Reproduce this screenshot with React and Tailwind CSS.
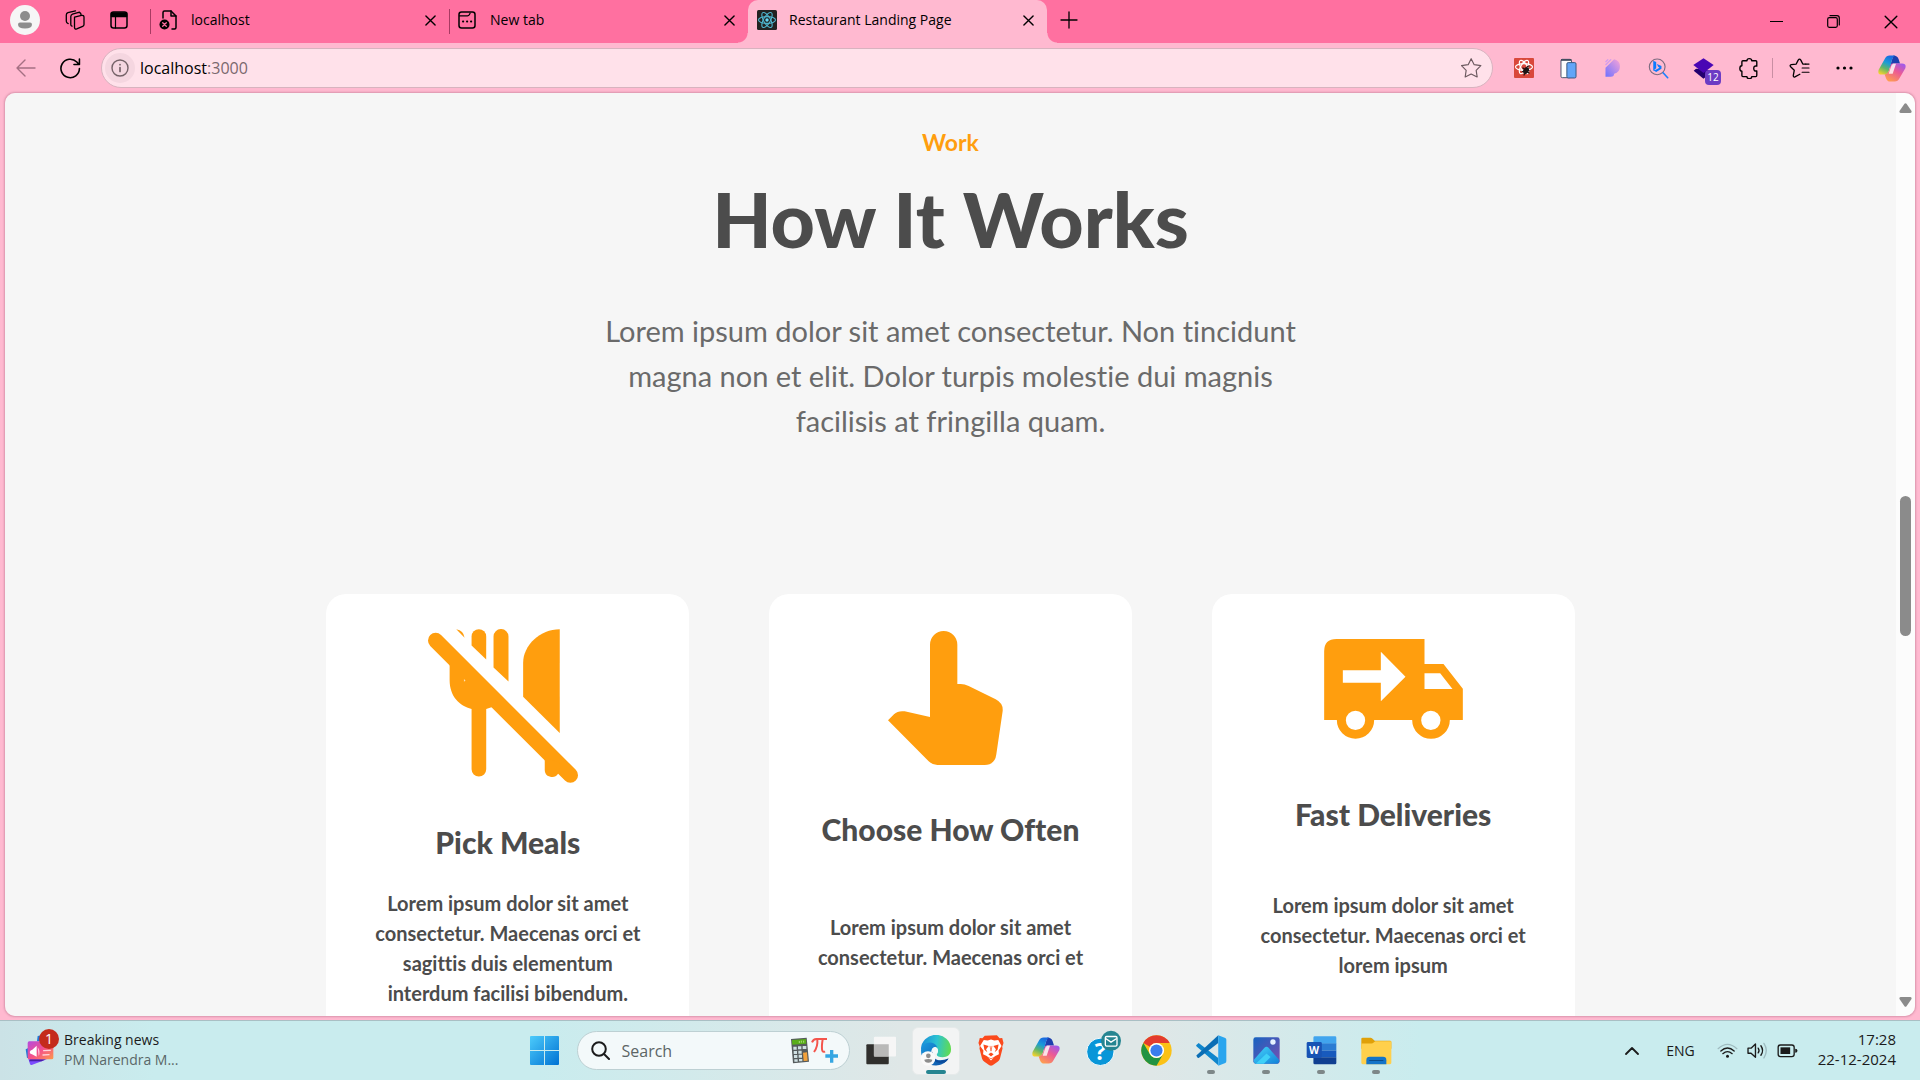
import React from "react";

/* ---------- window chrome icons ---------- */

function Line({ vb, w, h, sw = 1.5, children, className = "" }) {
  return (
    <svg viewBox={vb} width={w} height={h} fill="none" stroke="currentColor" strokeWidth={sw} strokeLinecap="round" strokeLinejoin="round" className={"shrink-0 " + className} aria-hidden="true">
      {children}
    </svg>
  );
}

const Avatar = () => (
  <svg viewBox="0 0 30 30" width="30" height="30" aria-hidden="true">
    <circle cx="15" cy="15" r="15" fill="#f6f6f6" />
    <circle cx="15" cy="11" r="5" fill="#8d8d8d" />
    <path d="M8 19.5q0-2 2-2h10q2 0 2 2 0 4-7 4t-7-4Z" fill="#8d8d8d" />
  </svg>
);

const Workspaces = () => (
  <Line vb="0 0 20 20" w="20" h="20" sw="1.3">
    <path d="M9.5 7.2 16.6 5.4q2.2-.3 2.4 1.6v7.4q0 1.4-1.3 1.9l-6 2.6q-2 .6-2.2-1.3Z" />
    <path d="M7 16.2q-1.200-.4-1.200-1.800V6.600q0-1.800 1.700-2.400l7-2" />
    <path d="M3.200 13.600q-1.900-.6-1.900-2.300V5q0-1.700 1.600-2.300L10.500.8" />
    <path d="M16 4.800q-.1-2.400-2-2.200" />
  </Line>
);

const VerticalTabs = () => (
  <Line vb="0 0 18 18" w="18" h="18">
    <rect x="1" y="1" width="16" height="16" rx="2.500" />
    <path d="M1.500 2h15v3.500h-15Z" fill="currentColor" />
    <path d="M5.500 6v11" strokeWidth="1.200" />
  </Line>
);

const BrokenPage = () => (
  <Line vb="0 0 18 20" w="18" h="20">
    <path d="M4 8V2.500Q4 1 5.500 1H12l5 5v11.500q0 1.500-1.500 1.500H13" />
    <path d="M12 1v5h5" />
    <circle cx="5.500" cy="14.500" r="5" fill="currentColor" stroke="none" />
    <path d="m3.700 12.700 3.600 3.600m0-3.600-3.600 3.600" stroke="#ff70a0" strokeWidth="1.300" />
  </Line>
);

const NewTabIcon = () => (
  <Line vb="0 0 18 18" w="18" h="18">
    <rect x="1" y="1" width="16" height="16" rx="2.500" />
    <path d="M1.500 4.800h8q1.300 0 1.800-1l.8-1.600" strokeWidth="1.200" />
    <path d="M5 10.500h.2M9 10.500h.2M13 10.500h.2" strokeWidth="2" />
  </Line>
);

const ReactIcon = () => (
  <svg viewBox="0 0 20 20" width="20" height="20" aria-hidden="true" className="shrink-0">
    <rect width="20" height="20" rx="1.500" fill="#222" />
    <g fill="none" stroke="#4fb6cf" strokeWidth="1.100">
      <ellipse cx="10" cy="10" rx="8.500" ry="3.400" />
      <ellipse cx="10" cy="10" rx="8.500" ry="3.400" transform="rotate(60 10 10)" />
      <ellipse cx="10" cy="10" rx="8.500" ry="3.400" transform="rotate(120 10 10)" />
    </g>
    <circle cx="10" cy="10" r="1.700" fill="#61dafb" />
  </svg>
);

const Cross = ({ s = 12, sw = 1.5 }) => (
  <Line vb="0 0 12 12" w={s} h={s} sw={sw}>
    <path d="m1 1 10 10M11 1 1 11" />
  </Line>
);

/* ---------- toolbar icons ---------- */

const Star = () => (
  <Line vb="60 176 62 60" w="21" h="20" sw="3.500" className="text-[#6d5a60]">
    <path d="m90 178 9 18 20 3-14 14 3 20-18-9-18 9 3-20-14-14 20-3Z" />
  </Line>
);

const ReactDev = () => (
  <svg viewBox="0 0 20 20" width="20" height="20" aria-hidden="true">
    <rect width="20" height="20" rx="1" fill="#d9483b" />
    <g fill="none" stroke="#fff" strokeWidth="1.200">
      <ellipse cx="10" cy="9" rx="8.500" ry="3.300" />
      <ellipse cx="10" cy="9" rx="7.500" ry="3.200" transform="rotate(60 10 9)" />
      <ellipse cx="10" cy="9" rx="7.500" ry="3.200" transform="rotate(120 10 9)" />
    </g>
    <g stroke="#1c1414" strokeWidth="1.200" strokeLinecap="round">
      <ellipse cx="12" cy="12.500" rx="2" ry="3" transform="rotate(30 12 12.500)" fill="#1c1414" />
      <path d="m9 10 6 5M8.500 13.500l6.500-1M10 17l4-7M13.500 8.500 15 8" />
    </g>
  </svg>
);

const Devices = () => (
  <svg viewBox="362 173 52 62" width="17" height="21" aria-hidden="true">
    <rect x="365" y="176" width="32" height="56" rx="4" fill="#fdfdfd" stroke="#46546b" strokeWidth="3" />
    <path d="M365 178h32" stroke="#3b4658" strokeWidth="5" />
    <rect x="383" y="186" width="28" height="47" rx="4" fill="#62a5f8" stroke="#38587f" strokeWidth="3" />
  </svg>
);

const PIcon = () => (
  <svg viewBox="497 178 50 54" width="17" height="18" aria-hidden="true">
    <defs>
      <linearGradient id="pg" x1="0" y1="1" x2="1" y2="0">
        <stop offset="0" stopColor="#6f72ff" />
        <stop offset="1" stopColor="#f7a3d8" />
      </linearGradient>
    </defs>
    <path d="M524 179a22 22 0 0 1 0 43q0 9-10 9h-16v-27Z" fill="url(#pg)" />
    <path d="m498 187 8-8m-8 17 17-17" stroke="#cf9bef" strokeWidth="3.500" />
  </svg>
);

const BingSearch = () => (
  <svg viewBox="626 172 62 64" width="21" height="21" aria-hidden="true" fill="none">
    <circle cx="653" cy="199" r="24" stroke="#7d6b80" strokeWidth="3.500" />
    <path d="m671 217 14 15" stroke="#1a80ff" strokeWidth="5" strokeLinecap="round" />
    <path d="m641 180 9 4v19l-9 8Z" fill="#0b7bff" />
    <path d="m641 209 9 6 16-10v-9l-14-6 4 9 4 3-11 6Z" fill="#0b7bff" />
  </svg>
);

const Layers = () => (
  <span className="relative block h-[21px] w-[21px]">
    <svg viewBox="761 173 62 62" width="21" height="21" aria-hidden="true">
      <path d="m763 211 7-6 52 6-30 23Z" fill="#22006f" />
      <path d="m792 174 30 20-30 23-30-23Z" fill="#4a06b4" />
    </svg>
    <span className="absolute left-3 top-3 grid h-[15px] w-4 place-items-center rounded-[4px] bg-[#6c3cc4] text-[10px] leading-none text-white">12</span>
  </span>
);

const Puzzle = () => (
  <Line vb="899 173 58 62" w="20" h="21" sw="4">
    <path d="M910 181h12q0-6 7-6t7 6h12q3 0 3 3v13q-9-2-9 7t9 7v13q0 4-3 4h-12q0 6-7 6t-7-6h-12q-3 0-3-3v-13q-6 0-6-8t6-8v-12q0-3 3-3Z" />
  </Line>
);

const Favorites = () => (
  <Line vb="1049 174 64 60" w="21" h="20" sw="4">
    <path d="M1100 192h-9l-6-12q-4-6-8 0l-6 12-15 2q-6 1-2 6l11 11-3 16q0 6 5 4l15-8" />
    <path d="M1089 204h21M1089 217h21M1100 192h10" strokeWidth="3.500" />
  </Line>
);

const Dots = () => (
  <svg viewBox="0 0 17 4" width="17" height="4" aria-hidden="true">
    <circle cx="2" cy="2" r="1.600" />
    <circle cx="8.500" cy="2" r="1.600" />
    <circle cx="15" cy="2" r="1.600" />
  </svg>
);

const Copilot = ({ id }) => (
  <svg viewBox="216 80 84 80" width="28" height="27" aria-hidden="true">
    <defs>
      <linearGradient id={id + "a"} x1=".6" y1="0" x2=".2" y2="1">
        <stop offset="0" stopColor="#1a6be0" />
        <stop offset=".35" stopColor="#1a9bd8" />
        <stop offset=".65" stopColor="#5fb56a" />
        <stop offset="1" stopColor="#f5d22b" />
      </linearGradient>
      <linearGradient id={id + "b"} x1=".9" y1="0" x2=".2" y2="1">
        <stop offset="0" stopColor="#9b59f0" />
        <stop offset=".45" stopColor="#ec5a95" />
        <stop offset="1" stopColor="#ffa04d" />
      </linearGradient>
    </defs>
    <path d="M262 81q12 0 16 11l4 13h-22l-10 14Z" fill="#1d3fae" />
    <path d="M237 90q4-9 14-9h16q-5 2-8 10l-11 37q-4 10-14 10h-8q-12 0-8-14Z" fill={`url(#${id}a)`} />
    <path d="M280 150q-4 9-14 9h-14q-8 0-12-10l-4-11q9-1 13-11l7-22q2 2 10 0h22q14 0 10 14Z" fill={`url(#${id}b)`} />
    <path d="M262 106h8l-10 30h-12l8-24q2-5 6-6Z" fill="#fdeef2" opacity=".9" />
  </svg>
);

/* ---------- meal section icons ---------- */

const NoMeals = () => (
  <svg viewBox="323 147 478 462" width="159" height="154" fill="#ff9e0e" aria-hidden="true">
    <path d="m346 181 405 405" stroke="#ff9e0e" strokeWidth="46" strokeLinecap="round" />
    <path d="M388 223v77c0 50 30 78 66 87v181a22 22 0 0 0 44 0V387l18-6h30Z" />
    <path d="M454 196v-27a22 22 0 0 1 44 0v69Z" />
    <path d="M520 262v-93a22 22 0 0 1 45 0v135Z" />
    <path d="M408 147q22 3 25 26Z" />
    <path d="M609 350V248c0-53 51-101 110-101v312Z" />
    <path d="M674 530v38a22 22 0 0 0 40 14l10-30Z" />
    <path d="m431 297 5 4-5 4Z" fill="#ffe0b0" />
  </svg>
);

const PointUp = () => (
  <svg viewBox="385 153 375 402" width="125" height="134" fill="#ff9e0e" aria-hidden="true">
    <path d="M511 411V194a41 41 0 0 1 82 0v118h10q12 0 24 6l81 40q23 12 21 35l-19 130q-4 32-35 32H533q-14 0-26-11L385 421l18-18q12-12 32-9Z" />
  </svg>
);

const Truck = () => (
  <svg viewBox="372 177 416 300" width="139" height="100" fill="#ff9e0e" aria-hidden="true">
    <path fillRule="evenodd" d="M372 214q0-37 37-37h264v75h57l58 74v94h-39a56.500 56.500 0 0 1-113 0H522a56 56 0 0 1-112 0h-38ZM428 271v37h114v56l74-74-74-75v56ZM673 280v47h84l-37-47ZM437 421a29 29 0 1 0 58 0a29 29 0 1 0-58 0ZM663 421a29 29 0 1 0 58 0a29 29 0 1 0-58 0Z" />
  </svg>
);

/* ---------- taskbar icons ---------- */

const News = () => (
  <span className="relative block h-8 w-9">
    <svg viewBox="74 98 90 96" width="30" height="32" aria-hidden="true">
      <defs>
        <linearGradient id="ng" x1="0" y1="0" x2="1" y2="1">
          <stop offset="0" stopColor="#b44be0" />
          <stop offset=".5" stopColor="#f4508c" />
          <stop offset="1" stopColor="#ff9a4a" />
        </linearGradient>
      </defs>
      <path d="m112 104 20-4v20h-22ZM76 144l8-4v30h-4Z" fill="#1f78d8" />
      <path d="m84 172 56 2-46 17q-4 1-5-3Z" fill="#7c4dff" />
      <path d="m90 174 46 0-12 6H86Z" fill="#4a1fa8" />
      <rect x="82" y="120" width="77" height="54" rx="5" fill="url(#ng)" />
      <path d="M88 152q2-6 8-7l13-12v33l-14-7q-6 0-7-7Z" fill="#fff" />
      <path d="M112 138q10 12 3 26Z" fill="#ffc4de" />
      <path d="m130 148 20-1M128 161l18-1" stroke="#ffd5dc" strokeWidth="4" strokeLinecap="round" />
    </svg>
    <span className="absolute -top-[5px] left-[14px] grid h-5 w-5 place-items-center rounded-full bg-[#c42b1c] text-[14px] leading-none text-white">1</span>
  </span>
);

const Start = () => (
  <svg viewBox="0 0 29 29" width="29" height="29" aria-hidden="true">
    <defs>
      <linearGradient id="wg" gradientUnits="userSpaceOnUse" x1="0" y1="0" x2="29" y2="29">
        <stop offset="0" stopColor="#4ccbfb" />
        <stop offset="1" stopColor="#0072d3" />
      </linearGradient>
    </defs>
    <path d="M0 1q0-1 1-1h13v14H0ZM15 0h13q1 0 1 1v13H15ZM0 15h14v14H1q-1 0-1-1ZM15 15h14v13q0 1-1 1H15Z" fill="url(#wg)" />
  </svg>
);

const MathDoodle = () => (
  <span className="relative block h-[29px] w-[50px] text-[32px] leading-[29px]">
    <svg viewBox="870 80 150 87" width="50" height="29" aria-hidden="true">
      <path d="m873 89 47-4 7 72-48 5Z" fill="#555b5c" />
      <path d="m876 92 42-3 1 14-42 3Z" fill="#58ad18" />
      <path d="M898 95v6M904 94v6M911 94v6" stroke="#b8e890" strokeWidth="2.500" />
      <g fill="#cfe0e2">
        <path d="M880 112h10v9h-10ZM894 111h10v9h-10ZM908 110h11v9h-11ZM881 125h10v9h-10ZM895 124h10v9h-10ZM882 137h10v9h-10ZM896 136h10v9h-10ZM883 150h10v7h-10ZM897 149h10v7h-10Z" />
        <path d="m909 130 12-1 2 25-12 1Z" fill="#f3a23a" />
      </g>
      <path d="M936 99q4-10 13-10h32M952 90q2 22-10 38M968 90q-4 24-1 34 3 5 8 2" stroke="#f4554c" strokeWidth="6" fill="none" />
      <path d="M995 122v38M976 140h38" stroke="#36a6e2" strokeWidth="10" />
    </svg>
  </span>
);

const TaskView = () => (
  <svg viewBox="1098 76 92 88" width="31" height="29" aria-hidden="true">
    <rect x="1098" y="101" width="68" height="61" rx="3" fill="#302f2d" />
    <rect x="1121" y="78" width="67" height="60" rx="3" fill="#f6f6f6" />
    <path d="M1121 101h45v37h-45Z" fill="#b9b9b8" />
  </svg>
);

const Edge = () => (
  <svg viewBox="1260 73 96 92" width="32" height="31" aria-hidden="true">
    <defs>
      <linearGradient id="eg1" x1="0" y1=".5" x2="1" y2=".6">
        <stop offset="0" stopColor="#1a8fd8" />
        <stop offset=".5" stopColor="#2cc3d2" />
        <stop offset="1" stopColor="#62dc4c" />
      </linearGradient>
      <linearGradient id="eg2" x1="0" y1="0" x2="1" y2="1">
        <stop offset="0" stopColor="#1b9ae0" />
        <stop offset="1" stopColor="#0b4fa5" />
      </linearGradient>
    </defs>
    <path d="M1263 116a45 43 0 0 1 90-2c1 18-12 25-25 25-14 0-21-5-16-11 5-7 2-21-14-22-20-1-32 6-35 10Z" fill="url(#eg1)" />
    <path d="M1263 118c1-24 36-32 49-10-12-3-20 8-18 20 3 18 22 26 50 16-8 14-22 20-36 20-26 0-46-20-45-46Z" fill="url(#eg2)" />
    <path d="M1297 120q2 20 12 27 14 8 37-5-6 14-22 14-20 2-30-15Z" fill="#0b4c9c" />
    <circle cx="1305" cy="119" r="9" fill="#f4f8fa" />
    <circle cx="1284" cy="143" r="22" fill="#fafafa" />
    <circle cx="1285" cy="135" r="7" fill="#8d8d8d" />
    <path d="M1273 147q12-5 24 0-1 9-12 9t-12-9Z" fill="#8d8d8d" />
  </svg>
);

const Brave = () => (
  <svg viewBox="54 73 78 94" width="26" height="31" aria-hidden="true">
    <path d="m74 75 37-1 8 9 8-1 4 15-4 12 1 5-8 31q-2 6-7 9l-15 11q-5 3-10 0l-15-11q-5-3-7-9l-8-31 1-5-4-12 4-15 8 1Z" fill="#fb4a1c" />
    <path d="m71 88 12 2 10-3 10 3 12-2 10 18-9 14 1 11-11 6-13 13-13-13-11-6 1-11-10-14Z" fill="#fff" />
    <path d="m70 102 16 4-8 10 4 9-9-7Zm46 0-16 4 8 10-4 9 9-7ZM85 131l8-5 8 5-8 7Z" fill="#fb4a1c" />
    <path d="m90 106 3 16 3-16M80 139l13 6 13-6" stroke="#fb4a1c" strokeWidth="2" fill="none" />
  </svg>
);

const Help = () => (
  <svg viewBox="381 55 108 110" width="36" height="37" aria-hidden="true">
    <circle cx="424" cy="120" r="41" fill="#0996d8" stroke="#f4fafc" strokeWidth="3" />
    <text x="424" y="145" textAnchor="middle" fontSize="70" fontWeight="700" fill="#fff" fontFamily="Open Sans, sans-serif">?</text>
    <circle cx="456" cy="87" r="30" fill="#268591" />
    <rect x="439" y="74" width="35" height="29" rx="4" fill="none" stroke="#fff" strokeWidth="4" />
    <path d="m440 80 16 11 17-11" fill="none" stroke="#fff" strokeWidth="4" />
  </svg>
);

const Chrome = () => (
  <svg viewBox="542 74 92 92" width="31" height="31" aria-hidden="true">
    <circle cx="588" cy="120" r="45" fill="#fbc116" />
    <path d="M549 97.500a45 45 0 0 1 78 0H588a22.500 22.500 0 0 0-19.500 11.250Z" fill="#e33b2e" />
    <path d="M549 97.500 568.500 131.250A22.500 22.500 0 0 0 607.500 131.250L588 165A45 45 0 0 1 549 97.500Z" fill="#229342" />
    <circle cx="588" cy="120" r="22.500" fill="#fff" />
    <circle cx="588" cy="120" r="18" fill="#3b7ded" />
  </svg>
);

const VSCode = () => (
  <svg viewBox="708 74 92 92" width="31" height="31" aria-hidden="true">
    <path d="m716 98 58 44v22l-64-56q-3-3 0-5Z" fill="#0f86cc" />
    <path d="m709 135 65-60v23l-58 44q-2 1-4-1Z" fill="#0a6eb5" />
    <path d="m774 75 21 8q3 2 3 5v63q0 4-3 6l-21 8Z" fill="#2aa5ee" />
  </svg>
);

const Photos = () => (
  <svg viewBox="878 80 80 80" width="27" height="27" aria-hidden="true">
    <defs>
      <linearGradient id="ph" x1="0" y1="0" x2="1" y2="1">
        <stop offset="0" stopColor="#1763c0" />
        <stop offset="1" stopColor="#7a4fb0" />
      </linearGradient>
      <linearGradient id="ph2" x1="0" y1="0" x2="1" y2="1">
        <stop offset="0" stopColor="#45d6fa" />
        <stop offset="1" stopColor="#1280d8" />
      </linearGradient>
    </defs>
    <rect x="879" y="81" width="78" height="78" rx="7" fill="url(#ph)" />
    <path d="m880 148 32-36q6-6 12 0l32 36q0 11-7 11h-62q-7 0-7-11Z" fill="url(#ph2)" />
    <path d="m886 159 32-30 12 10-20 20Z" fill="#3fd0f7" />
    <circle cx="937" cy="95" r="8" fill="#e6f1ff" />
  </svg>
);

const Word = () => (
  <svg viewBox="1036 77 92 86" width="31" height="29" aria-hidden="true">
    <path d="M1058 82q0-4 4-4h60q4 0 4 4v18h-68Z" fill="#41a5ee" />
    <path d="M1058 99h68v21h-68Z" fill="#2b7cd3" />
    <path d="M1058 120h68v20h-68Z" fill="#185abd" />
    <path d="M1058 140h68v17q0 4-4 4h-60q-4 0-4-4Z" fill="#103f91" />
    <rect x="1038" y="95" width="45" height="47" rx="4" fill="#1853b4" />
    <text x="1060" y="130" textAnchor="middle" fontSize="31" fontWeight="700" fill="#fff" fontFamily="Open Sans, sans-serif">W</text>
  </svg>
);

const Folder = () => (
  <svg viewBox="1202 79 93 83" width="31" height="28" aria-hidden="true">
    <path d="M1203 84q0-3 4-3h24q4 0 8 5l4 4h46q4 0 4 4v20h-90Z" fill="#e0a008" />
    <path d="M1203 98h30q4 0 8-4l4-3h48v65q0 4-4 4h-82q-4 0-4-4Z" fill="#ffd04c" />
    <path d="M1218 160v-12q0-10 10-10h40q10 0 10 10v12Z" fill="#1474c8" />
    <path d="M1228 149h40" stroke="#0b4c8c" strokeWidth="3" strokeLinecap="round" />
  </svg>
);

/* ---------- browser ---------- */

const tabs = [
  { title: "localhost", icon: <BrokenPage /> },
  { title: "New tab", icon: <NewTabIcon /> },
  { title: "Restaurant Landing Page", icon: <ReactIcon />, active: true },
];

function Tab({ title, icon, active }) {
  return (
    <div className={"relative flex w-[299px] items-center pb-[3px] pl-[9px] pr-3 " + (active ? "rounded-t-[10px] bg-[#ffb9d0]" : "")}>
      {!active && <span className="absolute left-0 top-[9px] h-[25px] w-px bg-[#a83a62]" />}
      {active && (
        <>
          <span className="absolute -left-[10px] bottom-0 h-[10px] w-[10px] bg-[radial-gradient(circle_at_0_0,transparent_9px,#ffb9d0_10px)]" />
          <span className="absolute -right-[10px] bottom-0 h-[10px] w-[10px] bg-[radial-gradient(circle_at_100%_0,transparent_9px,#ffb9d0_10px)]" />
        </>
      )}
      <button type="button" className="flex min-w-0 flex-1 items-center text-left">
        <span className="w-8 shrink-0">{icon}</span>
        <span className="truncate text-[14px] leading-5">{title}</span>
      </button>
      <button type="button" aria-label={"Close " + title} className="grid h-4 w-[14px] place-items-center">
        <Cross s="11" />
      </button>
    </div>
  );
}

function TitleBar() {
  return (
    <header className="flex h-[43px] shrink-0 bg-[#ff70a0] text-black">
      <div className="flex w-[150px] shrink-0 items-center gap-[25px] pb-[3px] pl-[10px]">
        <button type="button" aria-label="Profile"><Avatar /></button>
        <button type="button" aria-label="Workspaces"><Workspaces /></button>
        <button type="button" aria-label="Tab actions"><VerticalTabs /></button>
      </div>
      {tabs.map((t) => <Tab key={t.title} {...t} />)}
      <button type="button" aria-label="New tab" className="ml-[13px] grid place-items-center pb-1">
        <Line vb="0 0 18 18" w="18" h="18" sw="1.300"><path d="M9 1v16M1 9h16" /></Line>
      </button>
      <div className="ml-auto flex items-center pr-px">
        <button type="button" aria-label="Minimize" className="grid h-full w-[57px] place-items-center">
          <Line vb="0 0 13 13" w="13" h="13" sw="1.200"><path d="M0 6.500h13" /></Line>
        </button>
        <button type="button" aria-label="Restore" className="grid h-full w-[57px] place-items-center">
          <Line vb="0 0 13 13" w="13" h="13" sw="1.200"><rect x=".7" y="2.700" width="9.600" height="9.600" rx="1.500" /><path d="M3 .7h7q2.300 0 2.300 2.300v7" /></Line>
        </button>
        <button type="button" aria-label="Close" className="grid h-full w-[57px] place-items-center">
          <Cross s="14" sw="1.200" />
        </button>
      </div>
    </header>
  );
}

const extensions = [
  ["React Developer Tools", <ReactDev />],
  ["Device view", <Devices />],
  ["Picture tool", <PIcon />],
  ["Visual search", <BingSearch />],
  ["Layers", <Layers />],
  ["Extensions", <Puzzle />],
];

function Toolbar() {
  return (
    <nav className="flex h-[50px] shrink-0 items-center bg-[#ffb9d0] pl-[3px]">
      <button type="button" aria-label="Back" className="grid w-[45px] place-items-center text-[#a56f83]">
        <Line vb="0 0 20 18" w="20" h="18" sw="1.400"><path d="M19 9H1M9 1 1 9l8 8" /></Line>
      </button>
      <button type="button" aria-label="Refresh" className="grid w-[45px] place-items-center">
        <Line vb="0 0 20 20" w="21" h="21" sw="1.500"><path d="M18.500 10A8.800 8.800 0 1 1 16 3.800L18 6M18.500 1v5.200h-5.200" /></Line>
      </button>
      <div className="ml-2 flex h-10 flex-1 items-center rounded-full border border-[#d8b3bf] bg-[#ffe1ea] pl-[3px] pr-[10px]">
        <button type="button" aria-label="Site information" className="grid h-[30px] w-[30px] place-items-center rounded-full bg-[#f5d6e0] text-[#756268]">
          <Line vb="0 0 18 18" w="18" h="18" sw="1.400"><circle cx="9" cy="9" r="8" /><path d="M9 8.500v4M9 5.500v.2" strokeWidth="1.700" /></Line>
        </button>
        <div className="relative ml-[5px] h-6 flex-1 text-[16px] leading-6">
          <input aria-label="Address" defaultValue="localhost:3000" className="h-6 w-full bg-transparent text-transparent caret-black outline-none" />
          <span className="pointer-events-none absolute inset-0 text-black" aria-hidden="true">localhost<span className="text-[#7a686e]">:3000</span></span>
        </div>
        <button type="button" aria-label="Add to favorites"><Star /></button>
      </div>
      <div className="ml-2 flex items-center">
        {extensions.map(([name, icon]) => (
          <button key={name} type="button" aria-label={name} className="grid h-8 w-[45px] place-items-center">{icon}</button>
        ))}
        <span className="mx-px h-5 w-px bg-[#c98ea3]" />
        <button type="button" aria-label="Favorites" className="grid h-8 w-[50px] place-items-center"><Favorites /></button>
        <button type="button" aria-label="Settings and more" className="grid h-8 w-10 place-items-center"><Dots /></button>
        <button type="button" aria-label="Copilot" className="grid h-8 w-14 place-items-center"><Copilot id="ct" /></button>
      </div>
    </nav>
  );
}

/* ---------- page ---------- */

const cards = [
  { title: "Pick Meals", text: "Lorem ipsum dolor sit amet consectetur. Maecenas orci et sagittis duis elementum interdum facilisi bibendum.", icon: <NoMeals />, pad: "pt-[35px]", titleGap: "mt-[41px]", textGap: "mt-7" },
  { title: "Choose How Often", text: "Lorem ipsum dolor sit amet consectetur. Maecenas orci et", icon: <PointUp />, pad: "pt-[37px]", titleGap: "mt-[46px]", textGap: "mt-[65px]" },
  { title: "Fast Deliveries", text: "Lorem ipsum dolor sit amet consectetur. Maecenas orci et lorem ipsum", icon: <Truck />, pad: "pt-[45px]", titleGap: "mt-[57px]", textGap: "mt-[58px]" },
];

function Page() {
  return (
    <main className="min-w-0 flex-1 bg-[#f6f6f6] pt-[34px] text-center font-['Lato',sans-serif] text-[#4c4c4c] [font-variant-ligatures:none]">
      <p className="text-[23px] font-bold leading-[30px] text-[#ff9e0e]">Work</p>
      <h1 className="mt-4 text-[77px] font-black leading-[90px]">How It Works</h1>
      <p className="mx-auto mt-[45px] max-w-[740px] text-[29px] leading-[45px] text-[#6a6a6a]">
        Lorem ipsum dolor sit amet consectetur. Non tincidunt magna non et elit. Dolor turpis molestie dui magnis facilisis at fringilla quam.
      </p>
      <div className="mt-[151px] grid grid-cols-3 gap-20 px-[17%]">
        {cards.map((c) => (
          <article key={c.title} className={"flex flex-col items-center rounded-[20px] bg-white px-11 pb-24 " + c.pad}>
            {c.icon}
            <h2 className={"whitespace-nowrap text-[30px] font-black leading-9 " + c.titleGap}>{c.title}</h2>
            <p className={"text-[20px] font-bold leading-[30px] " + c.textGap}>{c.text}</p>
          </article>
        ))}
      </div>
    </main>
  );
}

function ScrollBar() {
  return (
    <div className="flex w-[19px] shrink-0 flex-col items-center bg-[#fcfcfc] pb-[9px] pt-[10px]" aria-hidden="true">
      <svg viewBox="0 0 13 10" width="13" height="10" fill="#8b8b8b"><path d="M5.500.8q1-1 2 0l5 7.200q.5 2-1.500 2H2Q0 10 .5 8Z" /></svg>
      <div className="flex-[383]" />
      <div className="w-[11px] flex-[140] rounded-full bg-[#8b8b8b]" />
      <div className="flex-[361]" />
      <svg viewBox="0 0 13 10" width="13" height="10" fill="#8b8b8b"><path d="M5.500 9.200q1 1 2 0l5-7.200q.5-2-1.500-2H2Q0 0 .5 2Z" /></svg>
    </div>
  );
}

/* ---------- taskbar ---------- */

const apps = [
  { name: "Task view", icon: <TaskView /> },
  { name: "Microsoft Edge", icon: <Edge />, active: true },
  { name: "Brave", icon: <Brave /> },
  { name: "Copilot", icon: <Copilot id="cb" /> },
  { name: "Get Help", icon: <span className="block pb-[5px] pl-[6px]"><Help /></span> },
  { name: "Google Chrome", icon: <Chrome /> },
  { name: "Visual Studio Code", icon: <VSCode />, open: true },
  { name: "Photos", icon: <Photos />, open: true },
  { name: "Word", icon: <Word />, open: true },
  { name: "File Explorer", icon: <Folder />, open: true },
];

function TaskBar() {
  return (
    <footer className="grid h-[60px] shrink-0 grid-cols-[1fr_auto_1fr] border-t border-[#a9bfc4] bg-[linear-gradient(90deg,#cbe2e6_0%,#c9ecee_8%,#c9ecee_28%,#dfe7e7_47%,#dfe7e7_60%,#c9ecee_74%,#c9ecee_100%)] text-[#1b1b1b]">
      <button type="button" className="flex items-center gap-[3px] pb-px pl-[25px] text-left">
        <News />
        <span className="text-[14px] leading-5">
          <span className="block">Breaking news</span>
          <span className="block text-[#5a6768]">PM Narendra M...</span>
        </span>
      </button>
      <div className="flex items-center">
        <button type="button" aria-label="Start" className="grid w-[55px] place-items-center"><Start /></button>
        <label className="ml-[5px] mr-1 flex h-[39px] w-[273px] items-center rounded-full border border-[#bdd0d3] bg-[#f3f9fa] pl-[13px] pr-[9px]">
          <Line vb="0 0 19 19" w="19" h="19" sw="2"><circle cx="8" cy="8" r="6.800" /><path d="m13 13 5 5" /></Line>
          <input type="search" aria-label="Search" placeholder="Search" className="ml-[12px] min-w-0 flex-1 bg-transparent text-[16px] leading-6 outline-none placeholder:text-[#5c6566]" />
          <MathDoodle />
        </label>
        {apps.map((a) => (
          <button key={a.name} type="button" aria-label={a.name} className="relative grid h-full w-[55px] place-items-center">
            <span className={"grid h-12 w-12 place-items-center rounded-md " + (a.active ? "border border-[#e6eaea] bg-[#f3f4f4]" : "")}>{a.icon}</span>
            {a.active && <span className="absolute bottom-[6px] left-[17px] h-1 w-5 rounded-full bg-[#268591]" />}
            {a.open && <span className="absolute bottom-[6px] left-[23px] h-1 w-2 rounded-full bg-[#7d8788]" />}
          </button>
        ))}
      </div>
      <div className="flex items-center justify-end pr-6 text-[14px]">
        <button type="button" aria-label="Show hidden icons" className="mr-[27px]">
          <Line vb="0 0 14 8" w="14" h="8" sw="1.800"><path d="m1 7 6-6 6 6" /></Line>
        </button>
        <button type="button" className="mr-[22px]">ENG</button>
        <button type="button" aria-label="Network, volume and battery" className="mr-5 flex items-center gap-[9px]">
          <svg viewBox="473 245 62 48" width="21" height="16" fill="none" stroke="currentColor" strokeWidth="4" strokeLinecap="round" aria-hidden="true">
            <path d="M476 262q28-26 56 0" stroke="#9fbcc0" />
            <path d="M484 269q20-18 40 0M490 277q14-12 28 0" />
            <circle cx="504" cy="285" r="4.500" fill="currentColor" stroke="none" />
          </svg>
          <svg viewBox="563 245 62 50" width="21" height="17" fill="none" stroke="currentColor" strokeWidth="4" strokeLinecap="round" strokeLinejoin="round" aria-hidden="true">
            <path d="M566 263h9l13-12v39l-13-12h-9ZM596 263q5 7 0 14M604 256q10 14 0 28" />
            <path d="M613 249q14 21 0 43" stroke="#9fbcc0" />
          </svg>
          <svg viewBox="653 250 62 42" width="21" height="14" fill="none" stroke="currentColor" strokeWidth="4" aria-hidden="true">
            <rect x="656" y="253" width="48" height="35" rx="7" />
            <path d="M663 260h29v20h-29Z" fill="currentColor" stroke="none" />
            <path d="M707 264q7 0 7 6t-7 6Z" fill="currentColor" stroke="none" />
          </svg>
        </button>
        <button type="button" className="pb-1 text-right text-[15px] leading-5">
          <span className="block">17:28</span>
          <span className="block">22-12-2024</span>
        </button>
      </div>
    </footer>
  );
}

export default function App() {
  return (
    <div className="flex h-screen flex-col overflow-hidden bg-[#ffb9d0] font-['Open_Sans',sans-serif]">
      <TitleBar />
      <Toolbar />
      <div className="mx-[5px] mb-1 flex min-h-0 flex-1 overflow-hidden rounded-[10px] shadow-[0_0_2px_1px_rgba(150,80,105,0.35)]">
        <Page />
        <ScrollBar />
      </div>
      <TaskBar />
    </div>
  );
}
